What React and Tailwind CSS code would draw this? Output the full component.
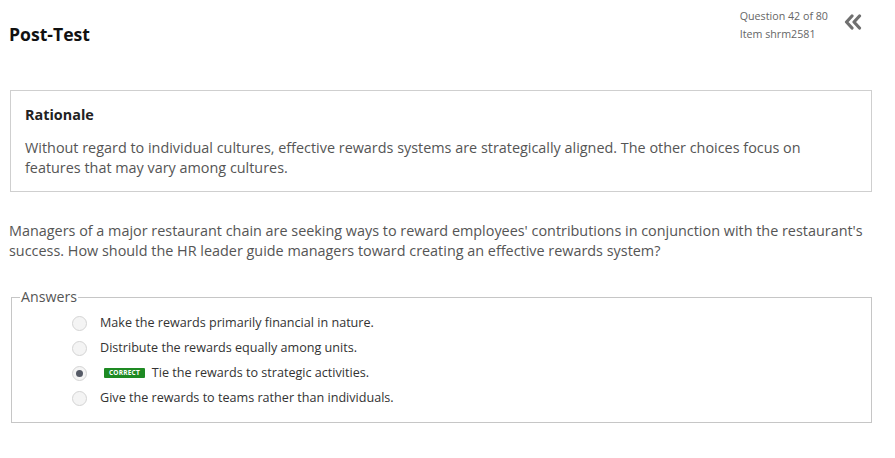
import React from "react";

const answers = [
  { text: "Make the rewards primarily financial in nature.", checked: false },
  { text: "Distribute the rewards equally among units.", checked: false },
  { text: "Tie the rewards to strategic activities.", checked: true, correct: true },
  { text: "Give the rewards to teams rather than individuals.", checked: false },
];

const Radio = ({ checked }) => (
  <span className="w-[15px] h-[15px] rounded-full border border-[#d4d4d4] bg-[#f4f4f4] flex items-center justify-center shrink-0">
    {checked && <span className="w-[7px] h-[7px] rounded-full bg-[#555a66]" />}
  </span>
);

const App = () => {
  return (
    <div
      className="w-[895px] h-[458px] bg-white text-[#555] overflow-hidden"
      style={{ fontFamily: '"Open Sans", "Liberation Sans", sans-serif' }}
    >
      {/* Header */}
      <div className="flex justify-between h-[90px] pl-[9px] pr-[33px]">
        <h1 className="text-[17.6px] font-bold text-[#111] mt-[22px] leading-[24px]">
          Post-Test
        </h1>
        <div className="flex items-start mt-[7px]">
          <div className="text-[10.7px] leading-[18px] text-[#666]">
            <div>Question 42 of 80</div>
            <div>Item shrm2581</div>
          </div>
          <svg
            className="ml-[16px] mt-[7px]"
            width="18"
            height="16"
            viewBox="0 0 18 16"
            fill="none"
            stroke="#707070"
            strokeWidth="3.2"
            strokeLinecap="round"
            strokeLinejoin="round"
          >
            <path d="M8 2 L2.5 8 L8 14" />
            <path d="M15.5 2 L10 8 L15.5 14" />
          </svg>
        </div>
      </div>

      {/* Rationale */}
      <div className="ml-[10px] w-[862px] h-[102px] border border-[#cfcfcf] px-[14px] pt-[14px]">
        <div className="text-[14.4px] font-bold text-[#222] leading-[20px]">Rationale</div>
        <p className="mt-[13px] text-[14.4px] leading-[20px] text-[#555] pr-[40px]">
          Without regard to individual cultures, effective rewards systems are strategically aligned. The
          other choices focus on features that may vary among cultures.
        </p>
      </div>

      {/* Question */}
      <p className="mt-[29px] ml-[9px] w-[870px] text-[14.4px] leading-[20px] text-[#555]">
        Managers of a major restaurant chain are seeking ways to reward employees' contributions in
        conjunction with the restaurant's success. How should the HR leader guide managers toward
        creating an effective rewards system?
      </p>

      {/* Answers */}
      <fieldset className="mt-[27px] ml-[11px] w-[861px] h-[135px] border border-[#c6c6c6] pl-[60px] pt-0">
        <legend className="ml-[-52px] px-[1px] text-[14.2px] text-[#555] leading-[18px]">Answers</legend>
        <div className="flex flex-col mt-[5px]">
          {answers.map((a, i) => (
            <label key={i} className="flex items-center h-[25px]">
              <Radio checked={a.checked} />
              <span className="ml-[13px] flex items-center text-[12.6px] text-[#333]">
                {a.correct && (
                  <span className="mr-[7px] ml-[4px] bg-[#1e8a23] text-white text-[6.5px] font-bold leading-[10px] px-[5px] rounded-[1px] tracking-[0.2px]">
                    CORRECT
                  </span>
                )}
                {a.text}
              </span>
            </label>
          ))}
        </div>
      </fieldset>
    </div>
  );
};

export default App;
